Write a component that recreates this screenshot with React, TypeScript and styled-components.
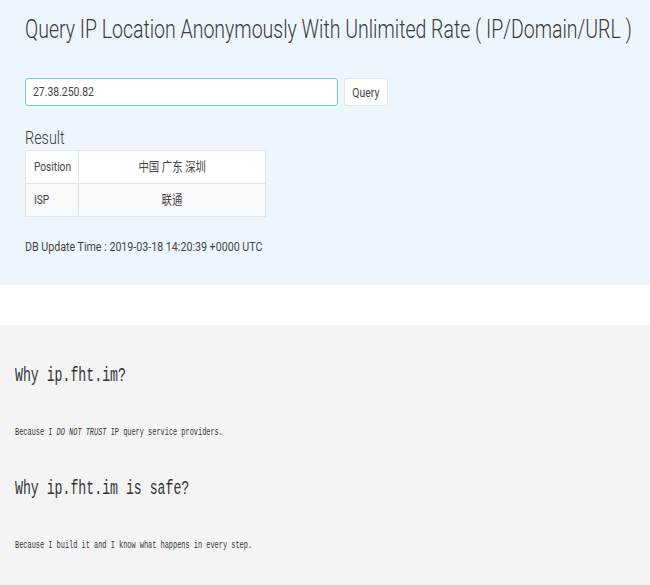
import React from 'react';
import styled, { createGlobalStyle } from 'styled-components';

const Global = createGlobalStyle`
  body {
    margin: 0;
    background: #fff;
    font-family: Roboto, "Noto Sans CJK SC", sans-serif;
    color: #333;
  }
`;

const Squash = styled.span<{ $k: number; $origin?: string }>`
  display: inline-block;
  white-space: nowrap;
  transform: scaleX(${(p) => p.$k});
  transform-origin: ${(p) => p.$origin || 'left center'};
`;

const Hero = styled.section`
  background: #eef6fd;
  height: 285px;
  padding: 0 25px;
  box-sizing: border-box;
  overflow: hidden;
`;

const Title = styled.h1`
  margin: 0;
  padding-top: 12px;
  height: 34px;
  font-size: 26px;
  font-weight: 300;
  line-height: 34px;
  color: #3a3a3a;
`;

const QueryRow = styled.form`
  display: flex;
  gap: 6px;
  margin-top: 32px;
`;

const Input = styled.div`
  width: 313px;
  height: 28px;
  box-sizing: border-box;
  border: 1px solid #6fd3c4;
  border-radius: 3px;
  background: #fff;
  padding-left: 7px;
  font-size: 13px;
  line-height: 26px;
  color: #444;
`;

const Button = styled.button`
  width: 44px;
  height: 28px;
  box-sizing: border-box;
  border: 1px solid #e3e6ea;
  border-radius: 3px;
  background: #fff;
  padding: 0;
  font-family: Roboto, sans-serif;
  font-size: 13px;
  color: #444;
`;

const ResultTitle = styled.h2`
  margin: 21px 0 0;
  font-size: 18px;
  font-weight: 300;
  line-height: 22px;
  height: 23px;
  color: #3a3a3a;
`;

const Table = styled.div`
  display: grid;
  grid-template-columns: 52px 1fr;
  width: 241px;
  border: 1px solid #e1e4e8;
  box-sizing: border-box;
  background: #fff;
`;

const Cell = styled.div<{ $center?: boolean; $striped?: boolean }>`
  height: 32px;
  line-height: 32px;
  font-size: 13px;
  color: #444;
  padding-left: ${(p) => (p.$center ? '0' : '8px')};
  text-align: ${(p) => (p.$center ? 'center' : 'left')};
  border-left: ${(p) => (p.$center ? '1px solid #e1e4e8' : 'none')};
  border-top: ${(p) => (p.$striped ? '1px solid #e1e4e8' : 'none')};
  background: ${(p) => (p.$striped ? '#f9f9f9' : '#fff')};
  overflow: hidden;
`;

const UpdateTime = styled.p`
  margin: 22px 0 0;
  font-size: 13px;
  line-height: 16px;
  color: #444;
`;

const Gap = styled.div`
  height: 40px;
  background: #fff;
`;

const About = styled.section`
  background: #f4f4f4;
  padding: 39px 15px 40px;
  font-family: "Liberation Mono", "DejaVu Sans Mono", monospace;
  color: #333;
`;

const Question = styled.h3`
  margin: 0;
  font-size: 20px;
  font-weight: normal;
  line-height: 24px;
`;

const Answer = styled.p`
  margin: 38px 0 0;
  font-size: 11px;
  line-height: 12px;
`;

const NextQuestion = styled(Question)`
  margin-top: 39px;
`;

const rows = [
  { label: 'Position', value: '中国 广东 深圳' },
  { label: 'ISP', value: '联通' },
];

export default function App() {
  return (
    <>
      <Global />
      <Hero>
        <Title>
          <Squash $k={0.75}>Query IP Location Anonymously With Unlimited Rate ( IP/Domain/URL )</Squash>
        </Title>
        <QueryRow onSubmit={(e) => e.preventDefault()}>
          <Input>
            <Squash $k={0.8}>27.38.250.82</Squash>
          </Input>
          <Button type="submit">
            <Squash $k={0.8} $origin="center">Query</Squash>
          </Button>
        </QueryRow>
        <ResultTitle>
          <Squash $k={0.8}>Result</Squash>
        </ResultTitle>
        <Table>
          {rows.map((r, i) => (
            <React.Fragment key={r.label}>
              <Cell $striped={i > 0}>
                <Squash $k={0.78}>{r.label}</Squash>
              </Cell>
              <Cell $center $striped={i > 0}>
                <Squash $k={0.8} $origin="center">{r.value}</Squash>
              </Cell>
            </React.Fragment>
          ))}
        </Table>
        <UpdateTime>
          <Squash $k={0.82}>DB Update Time : 2019-03-18 14:20:39 +0000 UTC</Squash>
        </UpdateTime>
      </Hero>
      <Gap />
      <About>
        <Question>
          <Squash $k={0.66}>Why ip.fht.im?</Squash>
        </Question>
        <Answer>
          <Squash $k={0.63}>
            Because I <em>DO NOT TRUST</em> IP query service providers.
          </Squash>
        </Answer>
        <NextQuestion>
          <Squash $k={0.66}>Why ip.fht.im is safe?</Squash>
        </NextQuestion>
        <Answer>
          <Squash $k={0.63}>Because I build it and I know what happens in every step.</Squash>
        </Answer>
      </About>
    </>
  );
}
